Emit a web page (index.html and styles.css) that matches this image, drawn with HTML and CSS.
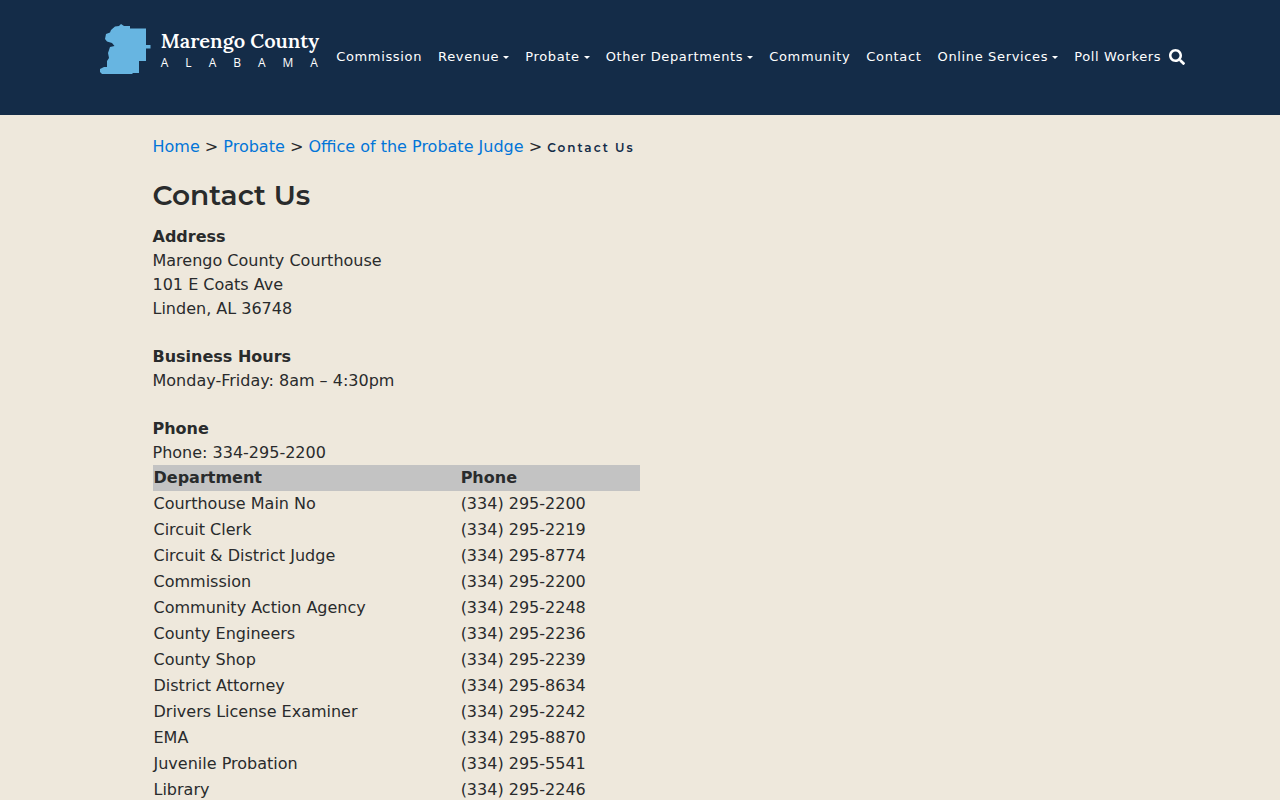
FILE: index.html
```html
<!DOCTYPE html>
<html lang="en">
<head>
<meta charset="utf-8">
<meta name="viewport" content="width=device-width, initial-scale=1">
<title>Contact Us - Marengo County, Alabama</title>
<link rel="stylesheet" href="styles.css">
</head>
<body>
<header class="site-header">
  <a class="brand" href="#">
    <svg class="brand-map" viewBox="0 0 52 52" aria-hidden="true"><path d="M16 3.500 L20 3 L22 1 L25 3 L31 3 L31 5.500 L47 5.500 L47 22 L51.500 22 L51.500 25.500 L47 25.500 L47 38 L40 38 L40 50 L34 50 L33 51 L3 51 L1 49 L1 46 L5 44 L8 44 L8 38 L10 35 L9 30 L11 24 L15.500 23 L13 20 L8 18.500 L6 16 L7 11 L11 9.500 L12 7Z"/></svg>
    <span class="brand-text">
      <span class="brand-name">Marengo County</span>
      <span class="brand-state">ALABAMA</span>
    </span>
  </a>
  <nav class="nav" aria-label="Main">
    <a class="nav-link" href="#">Commission</a>
    <a class="nav-link has-menu" href="#">Revenue</a>
    <a class="nav-link has-menu" href="#">Probate</a>
    <a class="nav-link has-menu" href="#">Other Departments</a>
    <a class="nav-link" href="#">Community</a>
    <a class="nav-link" href="#">Contact</a>
    <a class="nav-link has-menu" href="#">Online Services</a>
    <a class="nav-link" href="#">Poll Workers</a>
    <button class="search" type="button" aria-label="Search"><svg viewBox="0 0 512 512" aria-hidden="true"><path d="M505 442.700L405.300 343c-4.500-4.500-10.600-7-17-7H372c27.600-35.300 44-79.700 44-128C416 93.100 322.900 0 208 0S0 93.100 0 208s93.100 208 208 208c48.300 0 92.700-16.400 128-44v16.300c0 6.400 2.500 12.500 7 17l99.700 99.700c9.400 9.400 24.600 9.400 33.900 0l28.300-28.300c9.400-9.400 9.400-24.600.1-34zM208 336c-70.700 0-128-57.200-128-128 0-70.700 57.200-128 128-128 70.700 0 128 57.200 128 128 0 70.700-57.200 128-128 128z"/></svg></button>
  </nav>
</header>
<main class="content">
  <nav class="breadcrumb" aria-label="Breadcrumb">
    <a href="#">Home</a> &gt; <a href="#">Probate</a> &gt; <a href="#">Office of the Probate Judge</a> &gt; <span class="current">Contact Us</span>
  </nav>
  <h1 class="title">Contact Us</h1>
  <p class="block"><strong>Address</strong><br>Marengo County Courthouse<br>101 E Coats Ave<br>Linden, AL 36748</p>
  <p class="block"><strong>Business Hours</strong><br>Monday-Friday: 8am – 4:30pm</p>
  <p class="block phone"><strong>Phone</strong><br>Phone: 334-295-2200</p>
  <table class="directory">
    <thead><tr><th class="dept">Department</th><th>Phone</th></tr></thead>
    <tbody>
      <tr><td>Courthouse Main No</td><td>(334) 295-2200</td></tr>
      <tr><td>Circuit Clerk</td><td>(334) 295-2219</td></tr>
      <tr><td>Circuit &amp; District Judge</td><td>(334) 295-8774</td></tr>
      <tr><td>Commission</td><td>(334) 295-2200</td></tr>
      <tr><td>Community Action Agency</td><td>(334) 295-2248</td></tr>
      <tr><td>County Engineers</td><td>(334) 295-2236</td></tr>
      <tr><td>County Shop</td><td>(334) 295-2239</td></tr>
      <tr><td>District Attorney</td><td>(334) 295-8634</td></tr>
      <tr><td>Drivers License Examiner</td><td>(334) 295-2242</td></tr>
      <tr><td>EMA</td><td>(334) 295-8870</td></tr>
      <tr><td>Juvenile Probation</td><td>(334) 295-5541</td></tr>
      <tr><td>Library</td><td>(334) 295-2246</td></tr>
    </tbody>
  </table>
</main>
</body>
</html>
```

FILE: styles.css
```css
* { box-sizing: border-box; }
body {
  margin: 0;
  background: #eee8dc;
  color: #292b2c;
  font: 16px/24px "DejaVu Sans", sans-serif;
}
a { color: #0275d8; text-decoration: none; }
a:hover { text-decoration: underline; }

.site-header {
  display: flex;
  justify-content: center;
  align-items: flex-start;
  gap: 9px;
  padding: 23px 16px 40px 20px;
  background: #142c48;
}
.brand { display: flex; gap: 10px; color: #fff; }
.brand-map { width: 52px; height: 52px; fill: #67b5e1; }
.brand-text { display: flex; flex-direction: column; padding-top: 6px; }
.brand-name { font: 600 20px/24px Lora, Merriweather, "DejaVu Serif", serif; }
.brand-state { font: 12px/20px "Open Sans", sans-serif; letter-spacing: 17px; margin-right: -17px; }

.nav { display: flex; align-items: center; padding-top: 22px; }
.nav-link {
  padding: 0 8px;
  color: #fff;
  font-size: 13px;
  letter-spacing: 0.05em;
  white-space: nowrap;
}
.has-menu::after {
  content: "";
  display: inline-block;
  margin-left: 4px;
  vertical-align: 2px;
  border: 3px solid transparent;
  border-top-color: #fff;
  border-bottom: 0;
}
.search { display: flex; padding: 0; border: 0; background: none; cursor: pointer; }
.search svg { width: 16px; height: 16px; fill: #fff; }

.content { max-width: 975px; margin: 0 auto; padding-top: 20px; }
.current {
  color: #142c48;
  font: 600 12px/24px Montserrat, Inter, sans-serif;
  letter-spacing: 2px;
}
.title { margin: 19px 0 14px; font: 600 28px/32px Montserrat, Inter, sans-serif; }
.block { margin: 0 0 24px; }
.phone { margin-bottom: 0; }
.directory { width: 50%; border-collapse: collapse; }
.directory th, .directory td { padding: 1px; text-align: left; }
.directory thead { background: #c3c3c3; }
.dept { width: 63%; }
```
